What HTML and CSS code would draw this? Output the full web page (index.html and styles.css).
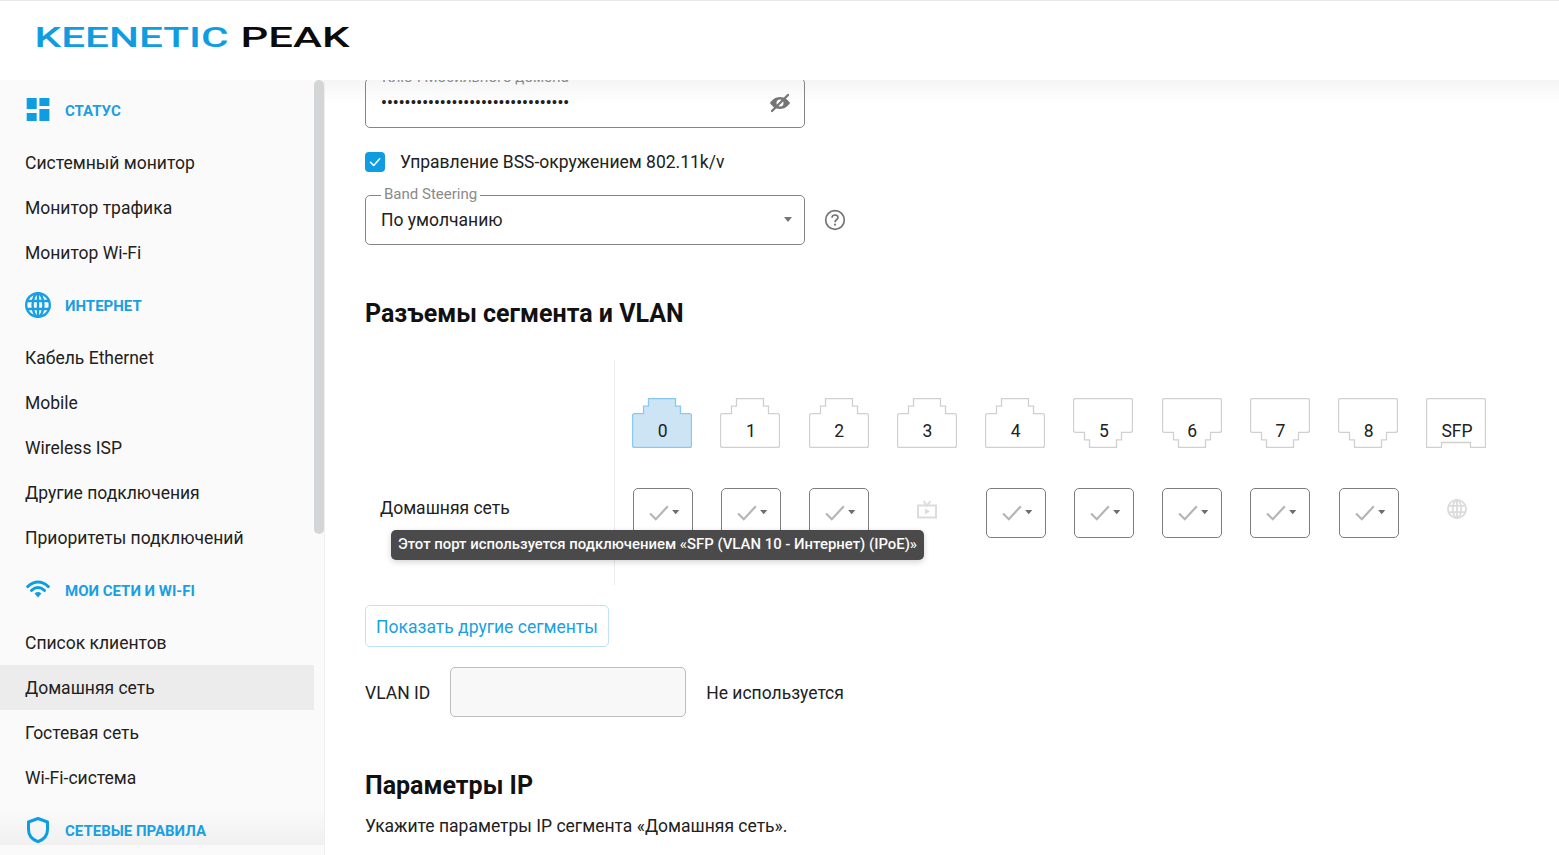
FILE: index.html
```html
<!DOCTYPE html>
<html lang="ru">
<head>
<meta charset="utf-8">
<title>Keenetic Peak</title>
<link rel="stylesheet" href="styles.css">
</head>
<body>
<svg class="defs" width="0" height="0" aria-hidden="true">
  <symbol id="port-up" viewBox="0 0 60 50"><path d="M16.5 .7H43.5V8.2H48.5V15.7H57.5Q59.5 15.7 59.5 17.7V47.5Q59.5 49.5 57.5 49.5H2.5Q.5 49.5 .5 47.5V17.7Q.5 15.7 2.5 15.7H11.5V8.2H16.5Z"/></symbol>
  <symbol id="port-down" viewBox="0 0 60 50"><path d="M2.5 .5H57.5Q59.5 .5 59.5 2.5V32.3Q59.5 34.3 57.5 34.3H48.5V41.8H43.5V49.3H16.5V41.8H11.5V34.3H2.5Q.5 34.3 .5 32.3V2.5Q.5 .5 2.5 .5Z"/></symbol>
  <symbol id="port-sfp" viewBox="0 0 60 50"><path d="M2.5 .5H57.5Q59.5 .5 59.5 2.5V49.5H44.5V44.5H15.5V49.5H.5V2.5Q.5 .5 2.5 .5Z"/></symbol>
  <symbol id="tick" viewBox="0 0 60 50"><path class="tick-line" d="M16.5 25.5L22.5 31.5L35 18"/><path class="tick-arrow" d="M39.5 21.8H47L43.2 26.4Z"/></symbol>
  <symbol id="globe" viewBox="0 0 24 24"><g fill="none" stroke="currentColor" stroke-width="2.2"><circle cx="12" cy="12" r="10.9"/><ellipse cx="12" cy="12" rx="5" ry="10.9"/><path d="M1.5 8.3H22.5M1.5 15.7H22.5M12 1V23"/></g></symbol>
</svg>

<header class="topbar">
  <svg class="logo" width="400" height="79" viewBox="0 0 400 79" role="img" aria-label="Keenetic Peak">
    <text class="logo-blue" x="34.5" y="45.5" textLength="194" lengthAdjust="spacingAndGlyphs">KEENETIC</text>
    <text class="logo-black" x="240.5" y="45.5" textLength="109" lengthAdjust="spacingAndGlyphs">PEAK</text>
  </svg>
</header>

<div class="shell">
  <aside class="sidebar">
    <nav class="nav">
      <div class="nav-group">
        <svg class="nav-icon" width="26" height="24" viewBox="0 0 26 24"><path class="solid" d="M1.700 0H11.700V11H1.700ZM1.700 15H11.700V23H1.700ZM14.400 0H24.400V8H14.400ZM14.400 11H24.400V23H14.400Z"/></svg>
        <span>Статус</span>
      </div>
      <a class="nav-item">Системный монитор</a>
      <a class="nav-item">Монитор трафика</a>
      <a class="nav-item">Монитор Wi-Fi</a>

      <div class="nav-group">
        <svg class="nav-icon" width="26" height="26"><use href="#globe"/></svg>
        <span>Интернет</span>
      </div>
      <a class="nav-item">Кабель Ethernet</a>
      <a class="nav-item">Mobile</a>
      <a class="nav-item">Wireless ISP</a>
      <a class="nav-item">Другие подключения</a>
      <a class="nav-item">Приоритеты подключений</a>

      <div class="nav-group">
        <svg class="nav-icon" width="26" height="24" viewBox="0 0 26 24"><path class="arc" d="M2.700 8.600Q13 -.6 23.300 8.600M6.600 12.400Q13 6.600 19.400 12.400"/><path class="solid" d="M9.600 15.400Q13 12.500 16.400 15.400L13 19.500Z"/></svg>
        <span>Мои сети и Wi-Fi</span>
      </div>
      <a class="nav-item">Список клиентов</a>
      <a class="nav-item active">Домашняя сеть</a>
      <a class="nav-item">Гостевая сеть</a>
      <a class="nav-item">Wi-Fi-система</a>

      <div class="nav-group">
        <svg class="nav-icon" width="26" height="26" viewBox="0 0 26 26"><path class="shield" d="M13 1.500L22.500 5V12.500C22.500 18.500 19 22.500 13 24.700C7 22.500 3.500 18.500 3.500 12.500V5Z"/></svg>
        <span>Сетевые правила</span>
      </div>
    </nav>
    <div class="scrollbar"><div class="scrollbar-thumb"></div></div>
    <div class="nav-fade"></div>
  </aside>

  <main class="main">
    <div class="top-fade"></div>

    <div class="field field-key">
      <span class="legend legend-key">Ключ Мобильного домена</span>
      <span class="dots">••••••••••••••••••••••••••••••••</span>
      <svg class="eye" width="22" height="20" viewBox="0 0 22 20"><path class="eye-body" fill-rule="evenodd" d="M11 4C15.500 4 19 6.800 21 10C19 13.200 15.500 16 11 16C6.500 16 3 13.200 1 10C3 6.800 6.500 4 11 4ZM11 6.500A3.500 3.500 0 1 0 11 13.500A3.500 3.500 0 1 0 11 6.500Z"/><path class="eye-slash" d="M3 18L19 2"/></svg>
    </div>

    <label class="check-row">
      <svg class="checkbox" width="20" height="20" viewBox="0 0 20 20"><rect class="checkbox-box" width="20" height="20" rx="4"/><path class="checkbox-mark" d="M5.500 10.300L8.700 13.500L14.700 6.800"/></svg>
      <span>Управление BSS-окружением 802.11k/v</span>
    </label>

    <div class="select-row">
      <div class="field field-select">
        <span class="legend">Band Steering</span>
        <span class="select-value">По умолчанию</span>
        <span class="select-arrow"></span>
      </div>
      <svg class="help" width="22" height="22" viewBox="0 0 22 22"><circle cx="11" cy="11" r="9.300"/><path d="M8 8.800C8 7 9.300 6 11 6S14 7 14 8.600C14 10.800 11 10.800 11 13.200"/><circle class="help-dot" cx="11" cy="15.700" r="1.100"/></svg>
    </div>

    <h2 class="heading heading-ports">Разъемы сегмента и VLAN</h2>

    <section class="ports-table">
      <div class="row-labels"><span>Домашняя сеть</span></div>
      <div class="ports-grid">
        <div class="port selected"><svg width="60" height="50"><use href="#port-up"/></svg><span>0</span></div>
        <div class="port"><svg width="60" height="50"><use href="#port-up"/></svg><span>1</span></div>
        <div class="port"><svg width="60" height="50"><use href="#port-up"/></svg><span>2</span></div>
        <div class="port"><svg width="60" height="50"><use href="#port-up"/></svg><span>3</span></div>
        <div class="port"><svg width="60" height="50"><use href="#port-up"/></svg><span>4</span></div>
        <div class="port"><svg width="60" height="50"><use href="#port-down"/></svg><span>5</span></div>
        <div class="port"><svg width="60" height="50"><use href="#port-down"/></svg><span>6</span></div>
        <div class="port"><svg width="60" height="50"><use href="#port-down"/></svg><span>7</span></div>
        <div class="port"><svg width="60" height="50"><use href="#port-down"/></svg><span>8</span></div>
        <div class="port"><svg width="60" height="50"><use href="#port-sfp"/></svg><span>SFP</span></div>

        <div class="cell"><svg class="membership" width="60" height="50"><use href="#tick"/></svg></div>
        <div class="cell"><svg class="membership" width="60" height="50"><use href="#tick"/></svg></div>
        <div class="cell"><svg class="membership" width="60" height="50"><use href="#tick"/></svg></div>
        <div class="cell"><svg class="mini tv" width="20" height="20" viewBox="0 0 20 20"><path d="M1 5.500H19V17.500H1ZM6.500 1L10 5.500L13.500 1"/><path class="tv-play" d="M8 8.500L13 11.500L8 14.500Z"/></svg></div>
        <div class="cell"><svg class="membership" width="60" height="50"><use href="#tick"/></svg></div>
        <div class="cell"><svg class="membership" width="60" height="50"><use href="#tick"/></svg></div>
        <div class="cell"><svg class="membership" width="60" height="50"><use href="#tick"/></svg></div>
        <div class="cell"><svg class="membership" width="60" height="50"><use href="#tick"/></svg></div>
        <div class="cell"><svg class="membership" width="60" height="50"><use href="#tick"/></svg></div>
        <div class="cell"><svg class="mini net" width="20" height="20"><use href="#globe"/></svg></div>
      </div>
      <div class="tooltip">Этот порт используется подключением «SFP (VLAN 10 - Интернет) (IPoE)»</div>
    </section>

    <button class="btn-outline" type="button">Показать другие сегменты</button>

    <div class="vlan-row">
      <span class="vlan-text">VLAN ID</span>
      <div class="vlan-input"></div>
      <span class="vlan-text">Не используется</span>
    </div>

    <h2 class="heading heading-ip">Параметры IP</h2>
    <p class="note">Укажите параметры IP сегмента «Домашняя сеть».</p>
  </main>
</div>
</body>
</html>
```

FILE: styles.css
```css
* { box-sizing: border-box; }
html, body { margin: 0; height: 100%; }
body {
  height: 855px;
  overflow: hidden;
  background: #fff;
  color: #212121;
  font-family: Roboto, "Noto Sans", sans-serif;
  font-size: 17.500px;
  line-height: 24px;
}
.defs { display: block; height: 0; }

/* header */
.topbar {
  height: 80px;
  background: #fff;
  border-top: 1px solid #e8e8e8;
}
.logo { display: block; }
.logo text { font-family: Roboto, sans-serif; font-size: 27px; font-weight: 500; }
.logo-blue { fill: #0f9de2; }
.logo-black { fill: #0b0b0b; }

/* layout */
.shell { display: flex; height: 775px; }

/* sidebar */
.sidebar {
  position: relative;
  display: flex;
  flex: 0 0 325px;
  background: #fafafa;
  border-right: 1px solid #efefef;
  overflow: hidden;
}
.nav { position: relative; z-index: 1; flex: 0 0 314px; display: flex; flex-direction: column; }
.nav-group {
  flex: 0 0 60px;
  display: flex;
  align-items: center;
  gap: 14px;
  padding-left: 25px;
  color: #1a9fe3;
  font-size: 15px;
  font-weight: 700;
  text-transform: uppercase;
}
.nav-group span { padding-top: 2px; }
.nav-icon { flex: none; }
.nav-item {
  flex: 0 0 45px;
  display: flex;
  align-items: center;
  padding: 1px 0 0 25px;
  color: #212121;
}
.nav-item.active { background: #ececec; }
.solid { fill: #0f9de2; }
.arc { fill: none; stroke: #0f9de2; stroke-width: 3; stroke-linecap: round; }
.shield { fill: none; stroke: #0f9de2; stroke-width: 3; stroke-linejoin: round; }
.scrollbar { flex: 0 0 10px; height: 454px; }
.scrollbar-thumb {
  height: 100%;
  background: #d4d5d7;
  border-radius: 5px;
}
.nav-fade {
  position: absolute;
  left: 0; right: 0; bottom: 10px;
  height: 36px;
  background: linear-gradient(to bottom, rgba(238,238,238,0), #f0f0f0);
  pointer-events: none;
}

/* main */
.main {
  position: relative;
  flex: 1;
  min-width: 0;
  overflow: hidden;
  padding-left: 40px;
}
.top-fade {
  position: absolute;
  top: 0; left: 0; right: 0;
  height: 24px;
  background: linear-gradient(to bottom, #f5f5f5, rgba(255,255,255,0));
}
.field {
  position: relative;
  width: 440px;
  height: 50px;
  border: 1px solid #858585;
  border-radius: 5px;
  display: flex;
  align-items: center;
}
.legend {
  position: absolute;
  top: -12px;
  left: 15px;
  padding: 0 3px;
  background: #fff;
  color: #8a8a8a;
  font-size: 15px;
  line-height: 20px;
}
.legend-key { left: 13px; background: transparent; }
.field-key { margin-top: -2px; padding-left: 15px; }
.dots {
  font-size: 16px;
  font-weight: 700;
  letter-spacing: .13px;
  color: #212121;
}
.eye { margin-left: auto; margin-right: 13px; }
.eye-body { fill: #757575; }
.eye-slash { stroke: #757575; stroke-width: 2.300; stroke-linecap: round; fill: none; }

.check-row {
  display: flex;
  align-items: center;
  gap: 15px;
  height: 20px;
  margin-top: 24px;
}
.checkbox-box { fill: #0f9de2; }
.checkbox-mark { fill: none; stroke: #fff; stroke-width: 1.600; stroke-linecap: round; stroke-linejoin: round; }

.select-row { display: flex; align-items: center; gap: 19px; margin-top: 23px; }
.field-select { padding-left: 15px; }
.select-arrow {
  margin: 0 12px 2px auto;
  border-left: 4px solid transparent;
  border-right: 4px solid transparent;
  border-top: 5px solid #757575;
}
.help { fill: none; stroke: #757575; stroke-width: 1.700; }
.help-dot { fill: #757575; stroke: none; }

.heading { margin: 0; font-size: 25px; line-height: 28px; font-weight: 700; color: #111; }
.heading-ports { margin-top: 55px; }
.heading-ip { margin-top: 55px; }

/* ports table */
.ports-table {
  position: relative;
  display: flex;
  height: 225px;
  margin-top: 32px;
}
.row-labels {
  flex: 0 0 250px;
  padding: 136px 0 0 15px;
  border-right: 1px solid #ededed;
}
.ports-grid {
  display: grid;
  grid-template-columns: repeat(10, 88.25px);
  grid-auto-rows: 50px;
  row-gap: 40px;
  padding: 38px 0 0 3.600px;
}
.port, .cell { display: grid; place-items: center; }
.port > * { grid-area: 1 / 1; }
.port span { align-self: end; padding-bottom: 5px; }
.port svg { margin-right: 1px; fill: #fff; stroke: #d3cfcf; stroke-width: 1.300; }
.port.selected svg { fill: #cde4f5; stroke: #88caef; }
.membership {
  border: 1px solid #7d7d7d;
  border-radius: 5px;
}
.tick-line { fill: none; stroke: #b9b4b4; stroke-width: 2.300; }
.tick-arrow { fill: #6e6e6e; }
.mini { position: relative; top: -3px; }
.tv { fill: none; stroke: #dcdcdc; stroke-width: 2; }
.tv-play { fill: #dcdcdc; stroke: none; }
.net { top: -4px; color: #dcdcdc; }
.tooltip {
  position: absolute;
  left: 26px;
  top: 170px;
  width: 533px;
  height: 30px;
  padding-bottom: 2px;
  display: flex;
  align-items: center;
  justify-content: center;
  white-space: nowrap;
  background: #4a4a4a;
  color: #fafafa;
  border-radius: 5px;
  box-shadow: 0 2px 6px rgba(0,0,0,.18);
  font-size: 14.900px;
  font-weight: 500;
}

.btn-outline {
  display: block;
  width: 244px;
  height: 42px;
  margin-top: 20px;
  padding: 1px 0 0;
  border: 1px solid #bfe2f6;
  border-radius: 5px;
  background: #fff;
  color: #1a9fe3;
  font: inherit;
}
.vlan-row {
  display: flex;
  align-items: center;
  height: 50px;
  margin-top: 20px;
  gap: 20px;
}
.vlan-text { padding-top: 2px; }
.vlan-input {
  width: 236px;
  height: 50px;
  background: #f8f8f8;
  border: 1px solid #bdbdbd;
  border-radius: 5px;
}
.note { margin: 14px 0 0; }
```
